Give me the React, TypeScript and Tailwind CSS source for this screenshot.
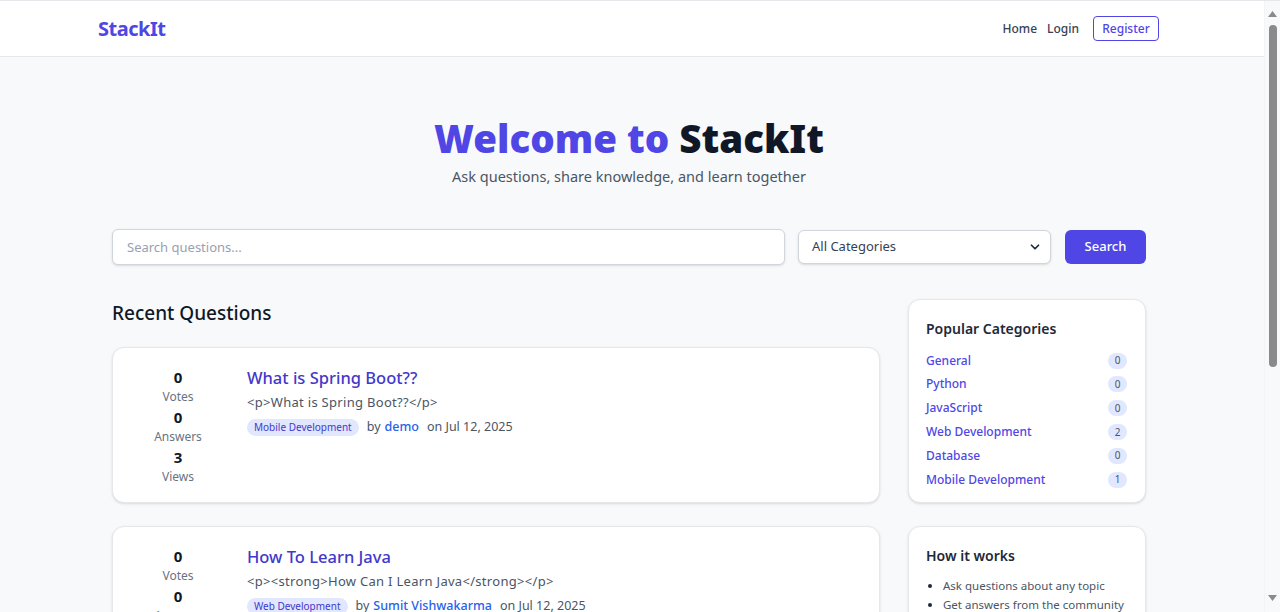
import { ChevronDown } from "lucide-react";

const categories = [
  { name: "General", count: 0 },
  { name: "Python", count: 0 },
  { name: "JavaScript", count: 0 },
  { name: "Web Development", count: 2 },
  { name: "Database", count: 0 },
  { name: "Mobile Development", count: 1 },
];

const questions = [
  {
    title: "What is Spring Boot??",
    body: "<p>What is Spring Boot??</p>",
    tag: "Mobile Development",
    author: "demo",
    date: "Jul 12, 2025",
    votes: 0,
    answers: 0,
    views: 3,
  },
  {
    title: "How To Learn Java",
    body: "<p><strong>How Can I Learn Java</strong></p>",
    tag: "Web Development",
    author: "Sumit Vishwakarma",
    date: "Jul 12, 2025",
    votes: 0,
    answers: 0,
    views: 5,
  },
];

const Stat = ({ value, label }: { value: number; label: string }) => (
  <div className="flex flex-col items-center">
    <span className="text-[15px] font-bold text-gray-900 leading-5">{value}</span>
    <span className="text-[12px] text-gray-500 leading-5">{label}</span>
  </div>
);

const Scrollbar = () => (
  <div className="w-4 h-full bg-[#f8f9fb] border-l border-gray-100 flex flex-col items-center py-1">
    <svg width="9" height="6" viewBox="0 0 9 6" className="mt-[6px]">
      <path d="M4.5 0 L9 6 L0 6 Z" fill="#8a8a8a" />
    </svg>
    <div className="w-2 mt-[8px] h-[342px] rounded-full bg-[#8a8a8a]" />
    <div className="flex-1" />
    <svg width="9" height="6" viewBox="0 0 9 6" className="mb-[7px]">
      <path d="M0 0 L9 0 L4.5 6 Z" fill="#8a8a8a" />
    </svg>
  </div>
);

export default function App() {
  return (
    <div
      className="h-[612px] w-[1280px] overflow-hidden flex bg-[#f8f9fb] border-t border-gray-200"
      style={{ fontFamily: '"Noto Sans", "Open Sans", sans-serif' }}
    >
      <div className="flex-1 flex flex-col overflow-hidden">
        <nav className="h-[56px] shrink-0 bg-white border-b border-gray-200 flex items-center">
          <div className="ml-[98px] w-[1061px] flex items-center justify-between">
            <span className="text-[20px] font-bold text-[#4f46e5] tracking-tight">StackIt</span>
            <div className="flex items-center gap-[10px] text-[12px] font-medium text-gray-700">
              <a className="cursor-pointer">Home</a>
              <a className="cursor-pointer">Login</a>
              <button className="ml-[4px] h-[25px] w-[66px] border border-[#4f46e5] rounded-[4px] text-[#4f46e5] text-[12px] font-medium">
                Register
              </button>
            </div>
          </div>
        </nav>

        <main className="ml-[112px] w-[1034px]">
          <section className="pt-[55px] flex flex-col items-center">
            <h1 className="text-[38.5px] font-black leading-[52px]">
              <span className="text-[#4f46e5]">Welcome to </span>
              <span className="text-gray-900">StackIt</span>
            </h1>
            <p className="mt-[2px] text-[14.5px] text-gray-600">Ask questions, share knowledge, and learn together</p>
          </section>

          <div className="mt-[41px] flex items-center gap-[13px]">
            <input
              placeholder="Search questions..."
              className="w-[673px] h-[36px] px-[14px] bg-white border border-gray-300 rounded-md shadow-sm text-[13px] placeholder:text-gray-400 outline-none"
            />
            <div className="relative w-[253px] h-[34px] bg-white border border-gray-300 rounded-md shadow-sm flex items-center px-[13px] text-[13px] text-gray-700">
              All Categories
              <ChevronDown className="absolute right-[8px] w-[14px] h-[14px] text-gray-800" strokeWidth={3} />
            </div>
            <button className="ml-[1px] w-[81px] h-[34px] bg-[#4f46e5] rounded-md text-white text-[13px] font-medium">
              Search
            </button>
          </div>

          <div className="mt-[34px] flex gap-[28px] items-start">
            <div className="w-[768px]">
              <h2 className="mt-[2px] text-[19px] font-medium text-gray-900 leading-[24px]">Recent Questions</h2>
              <div className="mt-[22px] flex flex-col gap-[23px]">
                {questions.map((q) => (
                  <div
                    key={q.title}
                    className="h-[156px] bg-white border border-gray-200 rounded-xl shadow-sm pl-[24px] pt-[19px] flex gap-[28px]"
                  >
                    <div className="w-[82px] flex flex-col">
                      <Stat value={q.votes} label="Votes" />
                      <Stat value={q.answers} label="Answers" />
                      <Stat value={q.views} label="Views" />
                    </div>
                    <div className="flex flex-col">
                      <a className="text-[16.5px] font-medium text-[#4338ca] leading-[22px]">{q.title}</a>
                      <p className="mt-[3px] text-[13px] tracking-[0.3px] text-gray-600 leading-[20px]">{q.body}</p>
                      <div className="mt-[6px] flex items-center text-[12.5px] text-gray-600">
                        <span className="px-[7px] h-[17px] flex items-center rounded-full bg-[#e0e7ff] text-[#4338ca] text-[10px]">
                          {q.tag}
                        </span>
                        <span className="ml-[8px]">by</span>
                        <span className="ml-[4px] text-[#2563eb] font-medium">{q.author}</span>
                        <span className="ml-[8px]">on {q.date}</span>
                      </div>
                    </div>
                  </div>
                ))}
              </div>
            </div>

            <aside className="w-[238px] flex flex-col gap-[23px]">
              <div className="h-[204px] bg-white border border-gray-200 rounded-xl shadow-sm px-[17px] pt-[19px]">
                <h3 className="text-[14px] font-semibold text-gray-800 leading-[20px]">Popular Categories</h3>
                <ul className="mt-[10px] flex flex-col">
                  {categories.map((c) => (
                    <li key={c.name} className="h-[23.8px] flex items-center justify-between">
                      <a className="text-[12px] font-medium text-[#4f46e5]">{c.name}</a>
                      <span className="w-[19px] h-[16px] mr-[1px] rounded-full bg-[#e0e7ff] text-[10px] text-gray-600 flex items-center justify-center">
                        {c.count}
                      </span>
                    </li>
                  ))}
                </ul>
              </div>
              <div className="h-[156px] bg-white border border-gray-200 rounded-xl shadow-sm px-[17px] pt-[19px]">
                <h3 className="text-[14px] font-semibold text-gray-800 leading-[20px]">How it works</h3>
                <ul className="mt-[10px] list-disc pl-[17px] text-[11.5px] text-gray-600 leading-[19px] marker:text-gray-800 whitespace-nowrap">
                  <li>Ask questions about any topic</li>
                  <li>Get answers from the community</li>
                  <li>Vote on the best answers</li>
                </ul>
              </div>
            </aside>
          </div>
        </main>
      </div>
      <Scrollbar />
    </div>
  );
}
